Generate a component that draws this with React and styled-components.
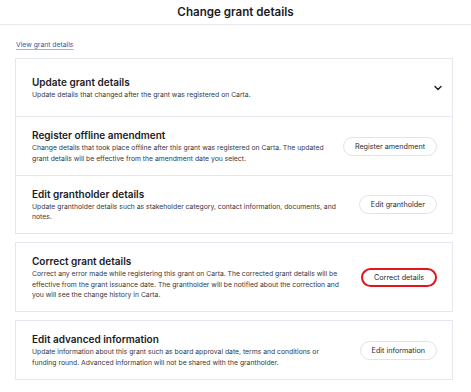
import React from 'react';
import styled, { createGlobalStyle } from 'styled-components';

const GlobalStyle = createGlobalStyle`
  body {
    margin: 0;
    background: #fff;
    font-family: Inter, "Noto Sans", sans-serif;
    color: #1b1b1f;
  }
`;

const Header = styled.header`
  height: 25px;
  border-bottom: 1px solid #e6e9ef;
  display: flex;
  align-items: center;
  justify-content: center;
  box-sizing: border-box;
`;

const Title = styled.h1`
  margin: 0;
  font-size: 11.6px;
  font-weight: 600;
`;

const Content = styled.main`
  padding: 15px 18px 0 15px;
`;

const Link = styled.a`
  display: block;
  width: max-content;
  font-size: 6.8px;
  line-height: 10px;
  color: #3657a8;
  text-decoration: underline;
  text-decoration-color: #9db0d8;
  text-underline-offset: 1.5px;
  margin: 0 0 8px 1px;
  cursor: pointer;
`;

const Card = styled.section`
  border: 1px solid #e3e7ee;
  margin-bottom: 8px;
`;

const Row = styled.div`
  display: flex;
  align-items: center;
  justify-content: space-between;
  gap: 16px;
  padding: ${(p) => (p.$accordion ? '16px 10px 16px 16px' : '11px 15px 11px 16px')};
  & + & {
    border-top: 1px solid #e3e7ee;
  }
`;

const Text = styled.div`
  flex: 1;
  min-width: 0;
  max-width: 314px;
`;

const RowTitle = styled.h2`
  margin: 0 0 1px;
  font-size: 10px;
  line-height: 14px;
  font-weight: 600;
  color: #1b1b1f;
`;

const Desc = styled.p`
  margin: 0;
  font-size: 6.8px;
  line-height: 10.3px;
  color: #36373c;
`;

const Button = styled.button`
  flex-shrink: 0;
  height: 19px;
  padding: 0 11px;
  border-radius: 999px;
  border: ${(p) => (p.$flagged ? '2px solid #e3141c' : '1px solid #dfe3ea')};
  background: #fff;
  font-family: inherit;
  font-size: 7.2px;
  color: #2a2b30;
  cursor: pointer;
`;

const Chevron = styled.svg`
  flex-shrink: 0;
  width: 8px;
  height: 6px;
`;

const groups = [
  [
    {
      title: 'Update grant details',
      desc: 'Update details that changed after the grant was registered on Carta.',
      accordion: true,
    },
    {
      title: 'Register offline amendment',
      desc: 'Change details that took place offline after this grant was registered on Carta. The updated grant details will be effective from the amendment date you select.',
      action: 'Register amendment',
    },
    {
      title: 'Edit grantholder details',
      desc: 'Update grantholder details such as stakeholder category, contact information, documents, and notes.',
      action: 'Edit grantholder',
    },
  ],
  [
    {
      title: 'Correct grant details',
      desc: 'Correct any error made while registering this grant on Carta. The corrected grant details will be effective from the grant issuance date. The grantholder will be notified about the correction and you will see the change history in Carta.',
      action: 'Correct details',
      flagged: true,
    },
  ],
  [
    {
      title: 'Edit advanced information',
      desc: 'Update information about this grant such as board approval date, terms and conditions or funding round. Advanced information will not be shared with the grantholder.',
      action: 'Edit information',
    },
  ],
];

function App() {
  return (
    <>
      <GlobalStyle />
      <Header>
        <Title>Change grant details</Title>
      </Header>
      <Content>
        <Link>View grant details</Link>
        {groups.map((rows, i) => (
          <Card key={i}>
            {rows.map((row) => (
              <Row key={row.title} $accordion={row.accordion}>
                <Text>
                  <RowTitle>{row.title}</RowTitle>
                  <Desc>{row.desc}</Desc>
                </Text>
                {row.accordion ? (
                  <Chevron viewBox="0 0 8 6">
                    <path d="M1 1.5 L4 4.5 L7 1.5" fill="none" stroke="#1b1b1f" strokeWidth="1.4" strokeLinecap="round" strokeLinejoin="round" />
                  </Chevron>
                ) : (
                  <Button $flagged={row.flagged}>{row.action}</Button>
                )}
              </Row>
            ))}
          </Card>
        ))}
      </Content>
    </>
  );
}

export default App;
